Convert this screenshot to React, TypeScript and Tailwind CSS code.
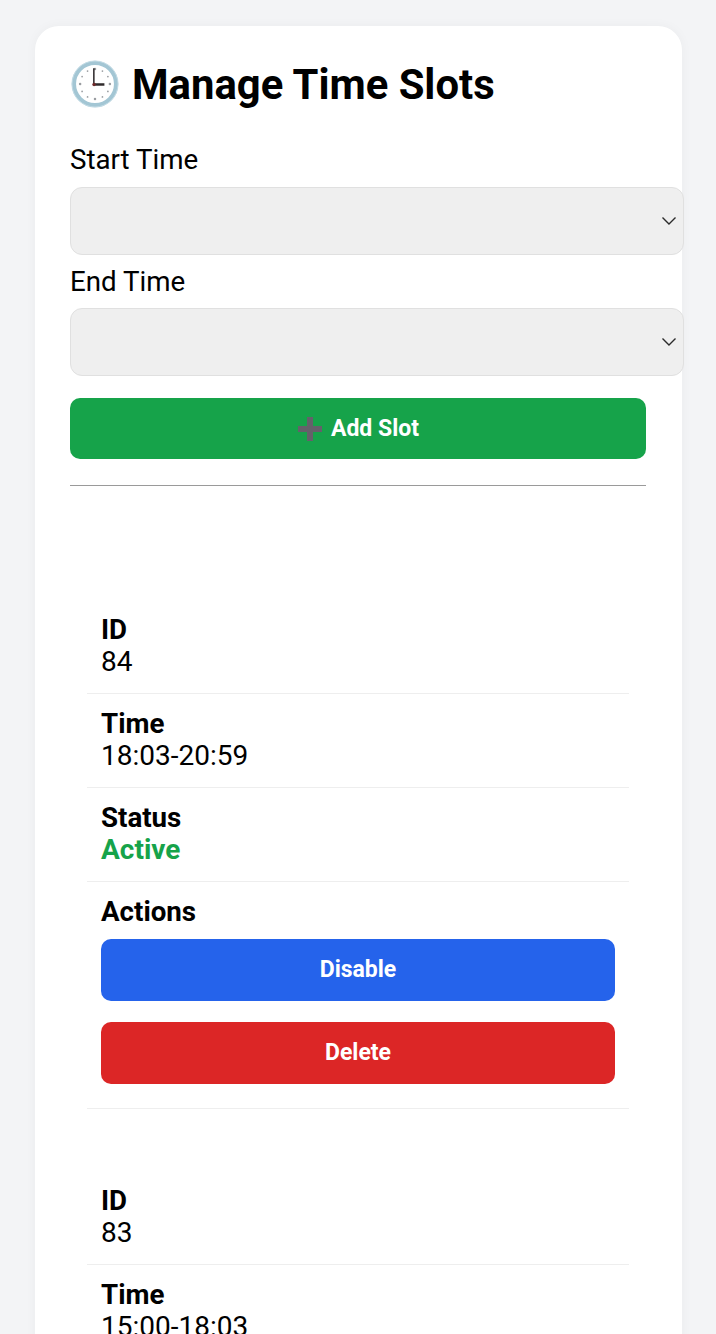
function Clock() {
  return (
    <svg width="48" height="48" viewBox="0 0 50 50" className="ml-[1px] shrink-0">
      <circle cx="25" cy="25" r="22" fill="#fff" stroke="#a3c6d4" strokeWidth="4.5" />
      <circle cx="25" cy="25" r="24" fill="none" stroke="#c6dde6" strokeWidth="1" />
      {[0, 30, 60, 90, 120, 150, 180, 210, 240, 270, 300, 330].map((a) => (
        <circle
          key={a}
          cx={25 + 15.5 * Math.sin((a * Math.PI) / 180)}
          cy={25 - 15.5 * Math.cos((a * Math.PI) / 180)}
          r={a % 90 === 0 ? 1.3 : 0.9}
          fill="#9a9da1"
        />
      ))}
      <path d="M23.8 8.5v17.5" stroke="#2f2a2c" strokeWidth="1.6" fill="none" />
      <path d="M23.8 25.5h11" stroke="#2f2a2c" strokeWidth="2.6" fill="none" />
      <circle cx="24" cy="25.5" r="1.8" fill="#6e2a2a" />
    </svg>
  );
}

function Field({ label, selectClass }: { label: string; selectClass: string }) {
  return (
    <div>
      <div className="text-[27.7px] leading-[32px] text-black">{label}</div>
      <div className={`flex h-[68px] w-[614px] items-center justify-end rounded-[12px] border border-[#e0e0e0] bg-[#efefef] pr-[5px] ${selectClass}`}>
        <svg width="18" height="18" viewBox="0 0 18 18" fill="none" stroke="#2b2b2b" strokeWidth="1.4">
          <path d="M2.5 5.5 9 12l6.5-6.5" />
        </svg>
      </div>
    </div>
  );
}

function Row({ label, value, valueClass = "text-black" }: { label: string; value: string; valueClass?: string }) {
  return (
    <div className="border-b border-[#eeeeee] px-[14px] pt-[13px] pb-[15px]">
      <div className="text-[27.7px] leading-[33px] font-bold text-black">{label}</div>
      <div className={`text-[28px] leading-[32px] ${valueClass}`}>{value}</div>
    </div>
  );
}

function Slot({ id, time }: { id: string; time: string }) {
  return (
    <div className="mb-[62px]">
      <Row label="ID" value={id} />
      <Row label="Time" value={time} />
      <Row label="Status" value="Active" valueClass="font-bold text-[#16a34a]" />
      <div className="border-b border-[#eeeeee] px-[14px] pt-[13px] pb-[24px]">
        <div className="text-[27.7px] leading-[33px] font-bold text-black">Actions</div>
        <button className="mt-[11px] block h-[62px] w-full rounded-[10px] bg-[#2563eb] pt-[1px] text-[23px] font-bold text-white">Disable</button>
        <button className="mt-[21px] block h-[62px] w-full rounded-[10px] bg-[#dc2626] pt-[1px] text-[23px] font-bold text-white">Delete</button>
      </div>
    </div>
  );
}

export default function App() {
  return (
    <div className="h-screen overflow-hidden bg-[#f3f4f6] px-[35px] pt-[26px] font-['Roboto',sans-serif]">
      <div className="h-[1400px] w-[647px] rounded-[24px] bg-white pl-[35px] pr-[36px] pt-[32px] shadow-[0_0_12px_rgba(0,0,0,0.04)]">
        <div className="flex h-[52px] items-center gap-[13px]">
          <Clock />
          <h1 className="pt-[2px] text-[41.8px] leading-[52px] font-bold text-black">Manage Time Slots</h1>
        </div>
        <div className="mt-[34px]">
          <Field label="Start Time" selectClass="mt-[11px]" />
        </div>
        <div className="mt-[11px]">
          <Field label="End Time" selectClass="mt-[10px]" />
        </div>
        <button className="mt-[22px] flex h-[61px] w-full items-center justify-center gap-[8px] rounded-[10px] bg-[#16a34a] pt-[1px] text-[23px] font-bold text-white">
          <svg width="26" height="26" viewBox="0 0 26 26" fill="#64616a">
            <path d="M10 1h6v9h9v6h-9v9h-6v-9H1v-6h9z" />
          </svg>
          Add Slot
        </button>
        <hr className="mt-[26px] border-t border-[#9a9a9a]" />
        <div className="mt-[114px] px-[17px]">
          <Slot id="84" time="18:03-20:59" />
          <Slot id="83" time="15:00-18:03" />
        </div>
      </div>
    </div>
  );
}
